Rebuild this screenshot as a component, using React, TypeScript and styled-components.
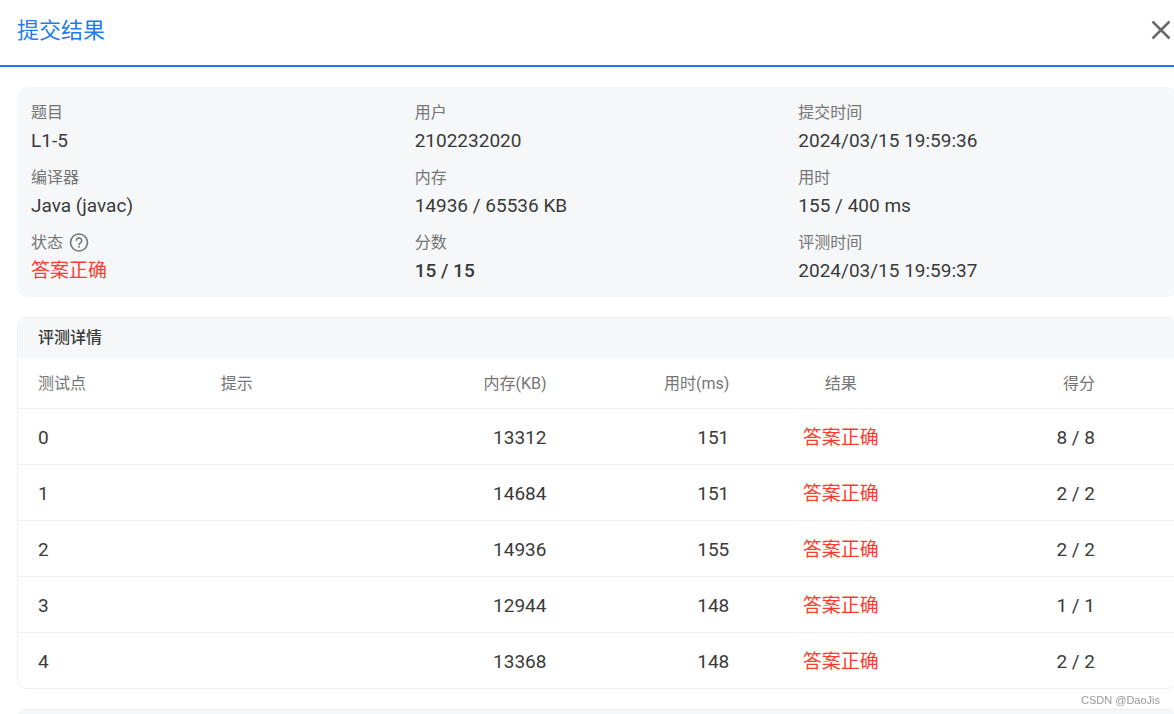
import React from "react";
import styled, { createGlobalStyle } from "styled-components";

const GlobalStyle = createGlobalStyle`
  * { box-sizing: border-box; }
  html, body { overflow: hidden; }
  body {
    margin: 0;
    background: #fff;
    color: #3a3a3a;
    font-family: Roboto, "Noto Sans CJK SC", sans-serif;
    font-size: 19px;
  }
`;

const Header = styled.header`
  display: flex;
  align-items: center;
  justify-content: space-between;
  padding: 15px 3px 18px 17px;
  border-bottom: 2px solid #1f7cee;
`;

const Title = styled.h1`
  margin: 0;
  font-size: 22px;
  line-height: 32px;
  font-weight: 400;
  color: #1f7cee;
`;

const CloseButton = styled.button`
  display: flex;
  padding: 0 0 2px;
  border: 0;
  background: none;
  color: #6a6a6a;
  cursor: pointer;
`;

const Content = styled.main`
  display: flex;
  flex-direction: column;
  gap: 20px;
  margin-right: -3px;
  padding: 20px 0 0 17px;
`;

const Summary = styled.dl`
  display: grid;
  grid-template-columns: repeat(3, 1fr);
  gap: 8px 19px;
  margin: 0;
  padding: 12px 14px 11px;
  border-radius: 10px;
  background: #f5f7f9;
`;

const Label = styled.dt`
  display: flex;
  align-items: center;
  gap: 6px;
  font-size: 16px;
  line-height: 28px;
  color: #757575;
`;

const Value = styled.dd<{ $tone?: "error" | "strong" }>`
  margin: 0;
  line-height: 28px;
  padding-bottom: 1px;
  font-weight: ${(p) => (p.$tone === "strong" ? 500 : 400)};
  color: ${(p) => (p.$tone === "error" ? "#ff3b30" : "inherit")};
`;

const HelpButton = styled.button`
  display: flex;
  padding: 0;
  border: 0;
  background: none;
  color: inherit;
  cursor: pointer;
`;

const Panel = styled.section`
  overflow: hidden;
  border: 1px solid #eeeff0;
  border-radius: 10px;
`;

const PanelTitle = styled.h2`
  margin: 0;
  min-height: 40px;
  padding: 0 20px;
  background: #f5f7f9;
  font-size: 16px;
  line-height: 40px;
  font-weight: 500;
`;

const Table = styled.table`
  width: 100%;
  table-layout: fixed;
  border-collapse: separate;
  border-spacing: 0;
`;

const ActionColumn = styled.col`
  width: 61px;
`;

type Align = "left" | "right" | "center";

const HeadCell = styled.th<{ $align?: Align }>`
  height: 51px;
  padding: 0 20px 2px;
  border-bottom: 1px solid #eeeff0;
  font-size: 16px;
  font-weight: 400;
  color: #757575;
  text-align: ${(p) => p.$align ?? "left"};
`;

const Cell = styled.td<{ $align?: Align; $error?: boolean }>`
  height: 56px;
  padding: 2px 20px 0;
  border-bottom: 1px solid #eeeff0;
  line-height: 28px;
  text-align: ${(p) => p.$align ?? "left"};
  color: ${(p) => (p.$error ? "#ff3b30" : "inherit")};
  tr:last-child > & {
    height: 55px;
    border-bottom: 0;
  }
`;

const Watermark = styled.small`
  position: fixed;
  right: 14px;
  bottom: 6px;
  font-family: "Liberation Sans", sans-serif;
  font-size: 11px;
  line-height: 16px;
  color: #999;
`;

const CloseIcon = () => (
  <svg width="20" height="20" viewBox="0 0 20 20" fill="none" stroke="currentColor" strokeWidth="2.5" aria-hidden="true">
    <path d="M1.5 1.5 18.5 18.5M18.5 1.5 1.5 18.5" />
  </svg>
);

const HelpIcon = () => (
  <svg width="20" height="20" viewBox="0 0 20 20" fill="none" stroke="currentColor" strokeWidth="1.6" aria-hidden="true">
    <circle cx="10" cy="9.5" r="8.5" />
    <path d="M7.3 7.7a2.7 2.7 0 1 1 4.3 2.1c-1 .7-1.6 1.1-1.6 2.2" />
    <circle cx="10" cy="13.8" r="1" fill="currentColor" stroke="none" />
  </svg>
);

type Field = { label: string; value: string; tone?: "error" | "strong"; help?: boolean };

const fields: Field[] = [
  { label: "题目", value: "L1-5" },
  { label: "用户", value: "2102232020" },
  { label: "提交时间", value: "2024/03/15 19:59:36" },
  { label: "编译器", value: "Java (javac)" },
  { label: "内存", value: "14936 / 65536 KB" },
  { label: "用时", value: "155 / 400 ms" },
  { label: "状态", value: "答案正确", tone: "error", help: true },
  { label: "分数", value: "15 / 15", tone: "strong" },
  { label: "评测时间", value: "2024/03/15 19:59:37" },
];

const cases = [
  { memory: 13312, time: 151, score: "8 / 8" },
  { memory: 14684, time: 151, score: "2 / 2" },
  { memory: 14936, time: 155, score: "2 / 2" },
  { memory: 12944, time: 148, score: "1 / 1" },
  { memory: 13368, time: 148, score: "2 / 2" },
];

export default function App() {
  return (
    <>
      <GlobalStyle />
      <Header>
        <Title>提交结果</Title>
        <CloseButton type="button" aria-label="关闭">
          <CloseIcon />
        </CloseButton>
      </Header>
      <Content>
        <Summary>
          {fields.map((f) => (
            <div key={f.label}>
              <Label>
                {f.label}
                {f.help && (
                  <HelpButton type="button" aria-label="帮助">
                    <HelpIcon />
                  </HelpButton>
                )}
              </Label>
              <Value $tone={f.tone}>{f.value}</Value>
            </div>
          ))}
        </Summary>
        <Panel>
          <PanelTitle>评测详情</PanelTitle>
          <Table>
            <colgroup>
              <col span={6} />
              <ActionColumn />
            </colgroup>
            <thead>
              <tr>
                <HeadCell>测试点</HeadCell>
                <HeadCell>提示</HeadCell>
                <HeadCell $align="right">内存(KB)</HeadCell>
                <HeadCell $align="right">用时(ms)</HeadCell>
                <HeadCell $align="center">结果</HeadCell>
                <HeadCell $align="right">得分</HeadCell>
                <HeadCell />
              </tr>
            </thead>
            <tbody>
              {cases.map((c, i) => (
                <tr key={i}>
                  <Cell>{i}</Cell>
                  <Cell />
                  <Cell $align="right">{c.memory}</Cell>
                  <Cell $align="right">{c.time}</Cell>
                  <Cell $align="center" $error>答案正确</Cell>
                  <Cell $align="right">{c.score}</Cell>
                  <Cell />
                </tr>
              ))}
            </tbody>
          </Table>
        </Panel>
        <Panel>
          <PanelTitle as="div" />
        </Panel>
      </Content>
      <Watermark>CSDN @DaoJis</Watermark>
    </>
  );
}
